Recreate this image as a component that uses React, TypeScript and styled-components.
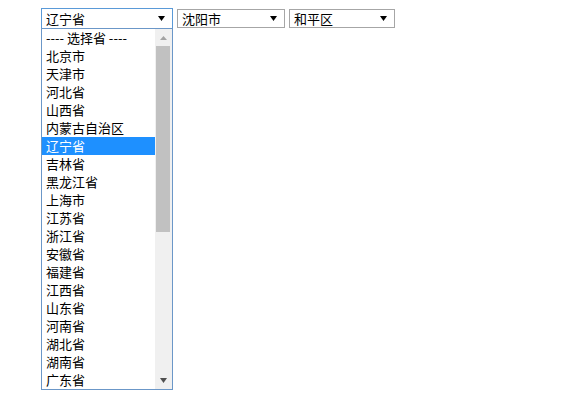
import React from "react";
import styled, { createGlobalStyle } from "styled-components";

const GlobalStyle = createGlobalStyle`
  html, body { background: #ffffff; }
  body {
    margin: 8px;
    font-family: "Noto Sans CJK SC", "Noto Sans", sans-serif;
    color: #000;
  }
`;

const Row = styled.div`
  display: flex;
  align-items: flex-start;
  gap: 4px;
  padding-left: 33px;
`;

const SelectColumn = styled.div`
  display: flex;
  flex-direction: column;
`;

const SelectBox = styled.div<{ $w: number; $focused?: boolean }>`
  box-sizing: border-box;
  flex: none;
  width: ${(p) => p.$w}px;
  height: ${(p) => (p.$focused ? 21 : 19)}px;
  margin-top: ${(p) => (p.$focused ? 0 : 1)}px;
  border: 1px solid ${(p) => (p.$focused ? "#5a9ad8" : "#a6a6a6")};
  background: #fff;
  display: flex;
  align-items: center;
  justify-content: space-between;
  padding: 0 7px 0 4px;
  font-size: 13px;
  line-height: 17px;
`;

const Label = styled.span`
  white-space: nowrap;
`;

const Caret = ({ color = "#000" }: { color?: string }) => (
  <svg width="7" height="5" viewBox="0 0 7 5" style={{ display: "block" }}>
    <polygon points="0,0 7,0 3.5,5" fill={color} />
  </svg>
);

const Dropdown = styled.div`
  box-sizing: border-box;
  margin-top: -1px;
  width: 132px;
  height: 362px;
  border: 1px solid #6b97c8;
  background: #fff;
  display: flex;
`;

const OptionList = styled.div`
  flex: 1;
  overflow: hidden;
  display: flex;
  flex-direction: column;
`;

const Option = styled.div<{ $selected?: boolean }>`
  flex: none;
  height: 18px;
  line-height: 18px;
  padding-left: 4px;
  font-size: 13px;
  white-space: nowrap;
  background: ${(p) => (p.$selected ? "#1e90ff" : "transparent")};
  color: ${(p) => (p.$selected ? "#fff" : "#000")};
`;

const Scrollbar = styled.div`
  width: 17px;
  flex: none;
  background: #f0f0f0;
  display: flex;
  flex-direction: column;
`;

const ScrollButton = styled.div`
  height: 17px;
  flex: none;
  display: flex;
  align-items: center;
  justify-content: center;
`;

const Track = styled.div`
  flex: 1;
  display: flex;
  flex-direction: column;
`;

const Thumb = styled.div`
  height: 186px;
  margin: 0 2px 0 1px;
  background: #c1c1c1;
`;

const UpArrow = ({ color }: { color: string }) => (
  <svg width="7" height="4" viewBox="0 0 7 4" style={{ display: "block" }}>
    <polygon points="0,4 7,4 3.5,0" fill={color} />
  </svg>
);

const provinces = [
  "北京市",
  "天津市",
  "河北省",
  "山西省",
  "内蒙古自治区",
  "辽宁省",
  "吉林省",
  "黑龙江省",
  "上海市",
  "江苏省",
  "浙江省",
  "安徽省",
  "福建省",
  "江西省",
  "山东省",
  "河南省",
  "湖北省",
  "湖南省",
  "广东省",
];

export default function App() {
  return (
    <>
      <GlobalStyle />
      <Row>
        <SelectColumn>
          <SelectBox $w={132} $focused>
            <Label>辽宁省</Label>
            <Caret />
          </SelectBox>
          <Dropdown>
            <OptionList>
              <Option>---- 选择省 ----</Option>
              {provinces.map((p) => (
                <Option key={p} $selected={p === "辽宁省"}>
                  {p}
                </Option>
              ))}
            </OptionList>
            <Scrollbar>
              <ScrollButton>
                <UpArrow color="#a3a3a3" />
              </ScrollButton>
              <Track>
                <Thumb />
              </Track>
              <ScrollButton>
                <Caret color="#505050" />
              </ScrollButton>
            </Scrollbar>
          </Dropdown>
        </SelectColumn>
        <SelectBox $w={108}>
          <Label>沈阳市</Label>
          <Caret />
        </SelectBox>
        <SelectBox $w={106}>
          <Label>和平区</Label>
          <Caret />
        </SelectBox>
      </Row>
    </>
  );
}
